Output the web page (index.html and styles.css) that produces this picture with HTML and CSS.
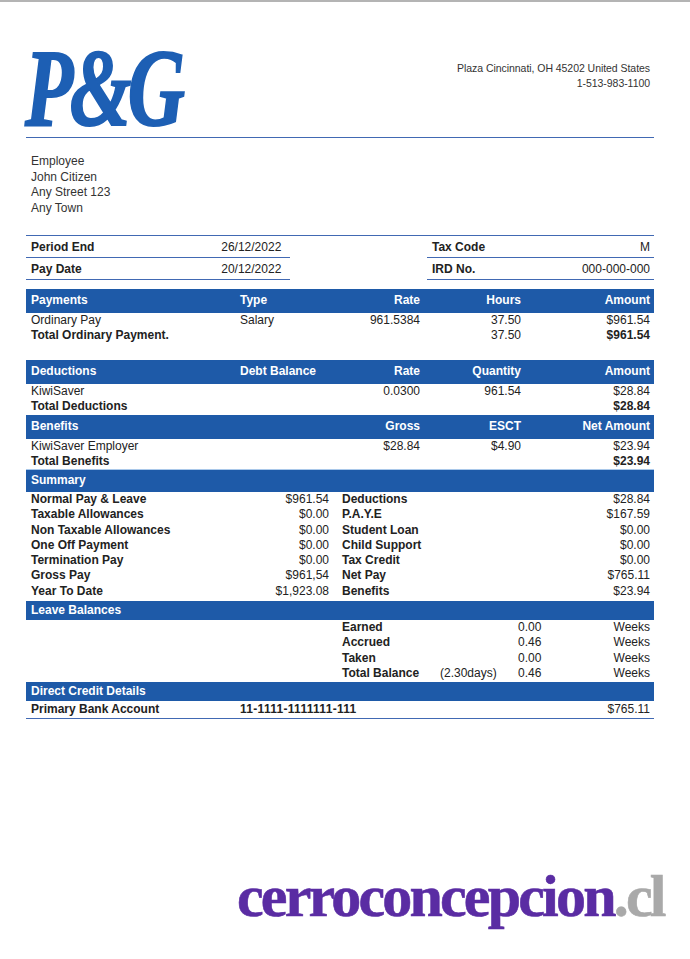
FILE: index.html
```html
<!DOCTYPE html>
<html>
<head>
<meta charset="utf-8">
<link rel="stylesheet" href="styles.css">
</head>
<body>
<div class="page">
  <header class="top">
    <div class="logo">P&amp;G</div>
    <div class="addr">Plaza Cincinnati, OH 45202 United States<br>1-513-983-1100</div>
  </header>

  <div class="employee">
    <div>Employee</div>
    <div>John Citizen</div>
    <div>Any Street 123</div>
    <div>Any Town</div>
  </div>

  <div class="info">
    <div class="info-cell left"><span class="b">Period End</span><span class="ival">26/12/2022</span></div>
    <div class="info-gap"></div>
    <div class="info-cell right"><span class="b">Tax Code</span><span>M</span></div>
    <div class="info-cell left"><span class="b">Pay Date</span><span class="ival">20/12/2022</span></div>
    <div class="info-gap"></div>
    <div class="info-cell right"><span class="b">IRD No.</span><span>000-000-000</span></div>
  </div>

  <section class="block payments">
    <div class="band cols5">
      <span>Payments</span><span>Type</span><span class="r">Rate</span><span class="r">Hours</span><span class="r">Amount</span>
    </div>
    <div class="row cols5">
      <span>Ordinary Pay</span><span>Salary</span><span class="r">961.5384</span><span class="r">37.50</span><span class="r">$961.54</span>
    </div>
    <div class="row cols5">
      <span class="b">Total Ordinary Payment.</span><span></span><span></span><span class="r">37.50</span><span class="r b">$961.54</span>
    </div>
  </section>

  <section class="block deductions">
    <div class="band cols5">
      <span>Deductions</span><span>Debt Balance</span><span class="r">Rate</span><span class="r">Quantity</span><span class="r">Amount</span>
    </div>
    <div class="row cols5">
      <span>KiwiSaver</span><span></span><span class="r">0.0300</span><span class="r">961.54</span><span class="r">$28.84</span>
    </div>
    <div class="row cols5 b">
      <span>Total Deductions</span><span></span><span></span><span></span><span class="r">$28.84</span>
    </div>
  </section>

  <section class="block benefits">
    <div class="band cols5">
      <span>Benefits</span><span></span><span class="r">Gross</span><span class="r">ESCT</span><span class="r">Net Amount</span>
    </div>
    <div class="row cols5">
      <span>KiwiSaver Employer</span><span></span><span class="r">$28.84</span><span class="r">$4.90</span><span class="r">$23.94</span>
    </div>
    <div class="row cols5 b">
      <span>Total Benefits</span><span></span><span></span><span></span><span class="r">$23.94</span>
    </div>
  </section>

  <section class="block summary">
    <div class="band mid"><span>Summary</span></div>
    <div class="sum-grid">
      <span class="b">Normal Pay &amp; Leave</span><span class="r">$961.54</span><span class="b l2">Deductions</span><span class="r">$28.84</span>
      <span class="b">Taxable Allowances</span><span class="r">$0.00</span><span class="b l2">P.A.Y.E</span><span class="r">$167.59</span>
      <span class="b">Non Taxable Allowances</span><span class="r">$0.00</span><span class="b l2">Student Loan</span><span class="r">$0.00</span>
      <span class="b">One Off Payment</span><span class="r">$0.00</span><span class="b l2">Child Support</span><span class="r">$0.00</span>
      <span class="b">Termination Pay</span><span class="r">$0.00</span><span class="b l2">Tax Credit</span><span class="r">$0.00</span>
      <span class="b">Gross Pay</span><span class="r">$961,54</span><span class="b l2">Net Pay</span><span class="r">$765.11</span>
      <span class="b">Year To Date</span><span class="r">$1,923.08</span><span class="b l2">Benefits</span><span class="r">$23.94</span>
    </div>
  </section>

  <section class="block leave">
    <div class="band short"><span>Leave Balances</span></div>
    <div class="leave-grid">
      <span></span><span class="b">Earned</span><span></span><span>0.00</span><span class="r">Weeks</span>
      <span></span><span class="b">Accrued</span><span></span><span>0.46</span><span class="r">Weeks</span>
      <span></span><span class="b">Taken</span><span></span><span>0.00</span><span class="r">Weeks</span>
      <span></span><span class="b">Total Balance</span><span>(2.30days)</span><span>0.46</span><span class="r">Weeks</span>
    </div>
  </section>

  <section class="block credit">
    <div class="band short"><span>Direct Credit Details</span></div>
    <div class="credit-row">
      <span class="b">Primary Bank Account</span><span class="b acct">11-1111-1111111-111</span><span class="r">$765.11</span>
    </div>
  </section>

  <div class="watermark"><span class="wm">cerroconcepcion<span class="tld">.cl</span></span></div>
</div>
</body>
</html>
```

FILE: styles.css
```css
html, body {
  margin: 0;
  padding: 0;
  background: #ffffff;
}
body {
  border-top: 2px solid #b4b4b4;
  font-family: "Liberation Sans", Arial, sans-serif;
  font-size: 12px;
  color: #222222;
}
.page {
  margin-left: 26px;
  width: 628px;
}
.b { font-weight: bold; }
.r { text-align: right; }

/* header */
.top {
  height: 135px;
  border-bottom: 1px solid #4169b3;
  display: flex;
  justify-content: space-between;
  align-items: flex-start;
}
.logo {
  margin-top: 31px;
  margin-left: -1px;
  font-family: "Liberation Serif", "Times New Roman", serif;
  font-weight: bold;
  font-style: italic;
  font-size: 110px;
  line-height: 1;
  color: #1d5fb4;
  -webkit-text-stroke: 2px #1d5fb4;
  letter-spacing: -5px;
  transform: scaleX(0.72);
  transform-origin: left top;
}
.addr {
  margin-top: 59px;
  padding-right: 4px;
  text-align: right;
  font-size: 10.5px;
  line-height: 15px;
  letter-spacing: -0.05px;
  color: #333333;
}

/* employee */
.employee {
  padding-top: 16px;
  padding-left: 5px;
  line-height: 15.5px;
  color: #333333;
}

/* info */
.info {
  margin-top: 19px;
  border-top: 1.5px solid #4169b3;
  display: grid;
  grid-template-columns: 264px 137px 227px;
}
.info-cell {
  height: 21px;
  border-bottom: 1.5px solid #4169b3;
  display: flex;
  align-items: center;
  padding: 0 4px 0 5px;
}
.info-cell.left span:first-child { width: 191px; }
.info-cell.left .ival { margin-left: auto; margin-right: 1px; width: 64px; }
.info-cell.right { justify-content: space-between; }

/* blocks */
.block { display: block; }
.payments { margin-top: 9px; }
.deductions { margin-top: 17px; }
.benefits { margin-top: 1px; border-bottom: 1.5px solid #a9c8ea; }
.summary { margin-top: 0; }
.leave { margin-top: 2px; }
.credit { margin-top: 1px; border-bottom: 1.5px solid #4169b3; }

.band {
  background: #1e5aa8;
  color: #ffffff;
  font-weight: bold;
  height: 24px;
  line-height: 22px;
  padding: 0 4px 0 5px;
}
.band.mid {
  height: 22px;
  line-height: 20px;
}
.band.short {
  height: 19px;
  line-height: 18px;
}
.cols5 {
  display: grid;
  grid-template-columns: 209px 100px 80px 101px 129px;
}
.row {
  height: 15px;
  line-height: 15px;
  padding: 0 4px 0 5px;
}

/* summary */
.sum-grid {
  display: grid;
  grid-template-columns: 209px 89px 192px 129px;
  grid-auto-rows: 15.3px;
  line-height: 15.3px;
  padding: 0 4px 0 5px;
}
.sum-grid .l2 { padding-left: 13px; }

/* leave */
.leave-grid {
  display: grid;
  grid-template-columns: 316px 98px 78px 40px 92px;
  grid-auto-rows: 15.33px;
  line-height: 15.33px;
  padding: 0 4px 0 0;
}

/* credit */
.credit-row {
  display: grid;
  grid-template-columns: 209px 200px 210px;
  height: 17px;
  line-height: 16px;
  padding: 0 4px 0 5px;
}
.acct { font-weight: bold; letter-spacing: 0.3px; }

/* watermark */
.watermark {
  margin-top: 147px;
  padding-left: 211px;
  height: 70px;
}
.wm {
  display: inline-block;
  font-family: "Liberation Serif", "Times New Roman", serif;
  font-weight: bold;
  font-size: 60px;
  line-height: 1;
  letter-spacing: -2.8px;
  color: #5a2ca3;
  -webkit-text-stroke: 0.6px #5a2ca3;
  white-space: nowrap;
}
.tld { color: #a9a9a9; -webkit-text-stroke: 0.6px #a9a9a9; }
```
